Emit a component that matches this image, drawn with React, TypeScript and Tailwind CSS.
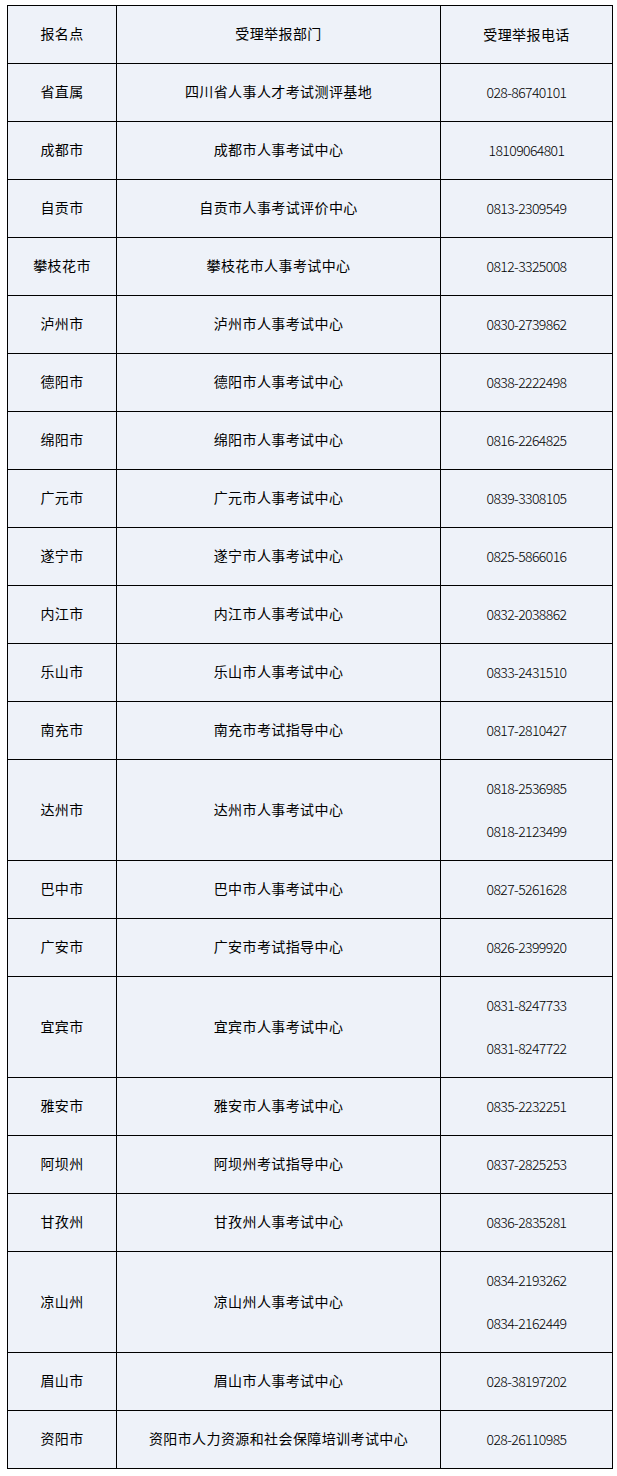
import React from 'react';

type Row = { site: string; dept: string; phones: string[] };

const rows: Row[] = [
  { site: '省直属', dept: '四川省人事人才考试测评基地', phones: ['028-86740101'] },
  { site: '成都市', dept: '成都市人事考试中心', phones: ['18109064801'] },
  { site: '自贡市', dept: '自贡市人事考试评价中心', phones: ['0813-2309549'] },
  { site: '攀枝花市', dept: '攀枝花市人事考试中心', phones: ['0812-3325008'] },
  { site: '泸州市', dept: '泸州市人事考试中心', phones: ['0830-2739862'] },
  { site: '德阳市', dept: '德阳市人事考试中心', phones: ['0838-2222498'] },
  { site: '绵阳市', dept: '绵阳市人事考试中心', phones: ['0816-2264825'] },
  { site: '广元市', dept: '广元市人事考试中心', phones: ['0839-3308105'] },
  { site: '遂宁市', dept: '遂宁市人事考试中心', phones: ['0825-5866016'] },
  { site: '内江市', dept: '内江市人事考试中心', phones: ['0832-2038862'] },
  { site: '乐山市', dept: '乐山市人事考试中心', phones: ['0833-2431510'] },
  { site: '南充市', dept: '南充市考试指导中心', phones: ['0817-2810427'] },
  { site: '达州市', dept: '达州市人事考试中心', phones: ['0818-2536985', '0818-2123499'] },
  { site: '巴中市', dept: '巴中市人事考试中心', phones: ['0827-5261628'] },
  { site: '广安市', dept: '广安市考试指导中心', phones: ['0826-2399920'] },
  { site: '宜宾市', dept: '宜宾市人事考试中心', phones: ['0831-8247733', '0831-8247722'] },
  { site: '雅安市', dept: '雅安市人事考试中心', phones: ['0835-2232251'] },
  { site: '阿坝州', dept: '阿坝州考试指导中心', phones: ['0837-2825253'] },
  { site: '甘孜州', dept: '甘孜州人事考试中心', phones: ['0836-2835281'] },
  { site: '凉山州', dept: '凉山州人事考试中心', phones: ['0834-2193262', '0834-2162449'] },
  { site: '眉山市', dept: '眉山市人事考试中心', phones: ['028-38197202'] },
  { site: '资阳市', dept: '资阳市人力资源和社会保障培训考试中心', phones: ['028-26110985'] },
];

const cell = 'flex flex-col items-center justify-center pb-[2px] border-r border-b border-black bg-[#eef2f9]';

function TableRow({ site, dept, phones, head = false }: Row & { head?: boolean }) {
  const tall = phones.length > 1;
  return (
    <div className={`flex ${tall ? 'h-[101px]' : 'h-[58px]'}`}>
      <div className={`${cell} w-[109px]`}>{site}</div>
      <div className={`${cell} w-[324px]`}>{dept}</div>
      <div className={`${cell} w-[172px] ${tall ? 'gap-[21px]' : ''} ${head ? '' : 'tracking-[-0.6px] font-light'}`}>
        {phones.map((p) => (
          <span key={p} className="leading-[22px]">{p}</span>
        ))}
      </div>
    </div>
  );
}

export default function App() {
  return (
    <div className="bg-white min-h-[1476px] pt-[5px] pl-[7px]">
      <div
        className="w-[606px] border-l border-t border-black text-[14px] text-black tracking-[0.4px]"
        style={{ fontFamily: '"Noto Sans CJK SC", "DejaVu Sans", sans-serif' }}
      >
        <TableRow site="报名点" dept="受理举报部门" phones={['受理举报电话']} head />
        {rows.map((r) => (
          <TableRow key={r.site} {...r} />
        ))}
      </div>
    </div>
  );
}
